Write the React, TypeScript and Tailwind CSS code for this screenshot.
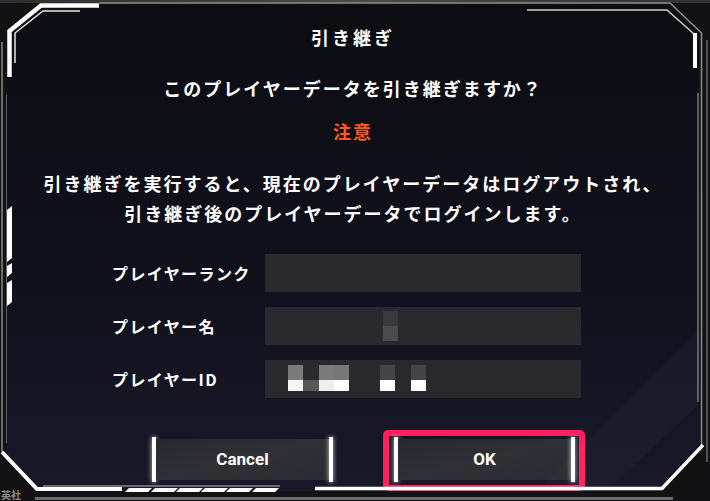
import React from "react";

const jp = "font-['Noto_Sans_CJK_JP','Noto_Sans',sans-serif]";

function Field({ children }: { children?: React.ReactNode }) {
  return <div className="relative w-[316px] h-[38px] bg-[#2a2a2e]">{children}</div>;
}

function Block({ x, y, w, h, c }: { x: number; y: number; w: number; h: number; c: string }) {
  // pixelated (mosaic) cells over the field value
  return <span className="absolute" style={{ left: x, top: y, width: w, height: h, background: c }} />;
}

function Row({ label, children }: { label: string; children?: React.ReactNode }) {
  return (
    <div className="flex items-center h-[38px]">
      <div className={`w-[153px] text-[16px] leading-[20px] font-bold tracking-[1.4px] text-white ${jp}`}>{label}</div>
      <Field>{children}</Field>
    </div>
  );
}

function GameButton({ label }: { label: string }) {
  return (
    <div className="flex items-stretch w-[181px] h-[45px]">
      <span className="w-[4px] bg-white shadow-[0_0_5px_rgba(255,255,255,0.8)]" />
      <div className="flex-1 my-[2px] flex items-center justify-center bg-linear-to-br from-[#28292e] via-[#303136] to-[#2a2b30] font-['Roboto',sans-serif] font-bold text-[17px] text-white">
        {label}
      </div>
      <span className="w-[4px] bg-white shadow-[0_0_5px_rgba(255,255,255,0.8)]" />
    </div>
  );
}

function Frame() {
  const dashes = [125, 151, 176, 201, 226, 252];
  return (
    <svg className="absolute inset-0 pointer-events-none" width="710" height="501" viewBox="0 0 710 501">
      {/* subtle light band bottom right */}
      <polygon points="540,488 610,488 698,405 698,330" fill="rgba(255,255,255,0.025)" />
      {/* top-left */}
      <path d="M9.5 77 V31 L41 5.5 H99" stroke="#fff" strokeWidth="4.5" fill="none" />
      <path d="M15 63 V33 L43 11 H80" stroke="#e5e5e5" strokeWidth="1.5" fill="none" />
      {/* outer grey lines */}
      <path d="M99 3 H670 L701.5 33 V445" stroke="#8c8c8c" strokeWidth="1.5" fill="none" />
      <path d="M2 42 V452" stroke="#8a8a8a" strokeWidth="1.5" fill="none" />
      <path d="M6.5 95 V443" stroke="#5e5e66" strokeWidth="1" fill="none" />
      <path d="M707 40 V462" stroke="#6a6a6a" strokeWidth="1.5" fill="none" />
      <path d="M698 93 V402" stroke="#7a7a7a" strokeWidth="1.5" fill="none" />
      {/* top-right */}
      <path d="M527 10 H667 L694 34" stroke="#d0d0d0" strokeWidth="1.5" fill="none" />
      <path d="M695 33 V68" stroke="#fff" strokeWidth="4" fill="none" />
      {/* left white segments */}
      <polygon points="7,210 12,206 12,258 7,262" fill="#fff" />
      <polygon points="7,266 12,263 12,273 7,277" fill="#fff" />
      <polygon points="7,283 12,280 12,302 7,306" fill="#fff" />
      {/* bottom-left */}
      <path d="M2 452 L37 489 H122" stroke="#fff" strokeWidth="4" fill="none" />
      <path d="M43 486 H280" stroke="#8a8a8a" strokeWidth="1.5" fill="none" />
      {dashes.map((x) => (
        <polygon key={x} points={`${x},492 ${x + 4},488 ${x + 27},488 ${x + 23},492`} fill="#fff" />
      ))}
      {/* bottom-right */}
      <path d="M703 445 L662 488.5 H315" stroke="#fff" strokeWidth="3.5" fill="none" />
      <rect x="35" y="497" width="638" height="3" fill="#6b6b6b" />
    </svg>
  );
}

export default function App() {
  return (
    <div className={`relative w-[710px] h-[501px] overflow-hidden bg-[#121214] ${jp}`}>
      <div className="h-[3px] bg-linear-to-r from-[#2e2e2e] via-[#4a4a4a] to-[#333]" />
      <div className="ml-[7px] mt-[2px] w-[692px] h-[486px] bg-linear-to-b from-[#0c0c13] via-[#10101b] to-[#18182a] [clip-path:polygon(0_25px,33px_0,660px_0,692px_28px,692px_440px,649px_486px,30px_486px,0_452px)] flex flex-col items-center pt-[20px]">
        <div className="text-[18px] leading-[24px] font-bold tracking-[3px] text-white">引き継ぎ</div>
        <div className="mt-[27px] text-[18px] leading-[24px] font-bold tracking-[2px] text-white">
          このプレイヤーデータを引き継ぎますか？
        </div>
        <div className="mt-[19px] text-[18px] leading-[24px] font-bold tracking-[2px] text-[#ff5a17]">注意</div>
        <div className="mt-[25px] text-[18px] leading-[30px] font-bold tracking-[2px] text-white text-center">
          <div>引き継ぎを実行すると、現在のプレイヤーデータはログアウトされ、</div>
          <div>引き継ぎ後のプレイヤーデータでログインします。</div>
        </div>

        <div className="self-start ml-[105px] mt-[26px] flex flex-col gap-[15px]">
          <Row label="プレイヤーランク" />
          <Row label="プレイヤー名">
            <Block x={118} y={4} w={15} h={15} c="#3a3a3e" />
            <Block x={118} y={19} w={15} h={15} c="#4b4b4e" />
          </Row>
          <Row label="プレイヤーID">
            <Block x={23} y={5} w={15} h={15} c="#7b7b7b" />
            <Block x={23} y={20} w={15} h={11} c="#f5f5f5" />
            <Block x={38} y={20} w={16} h={11} c="#58585a" />
            <Block x={54} y={5} w={15} h={15} c="#7b7b7b" />
            <Block x={54} y={20} w={15} h={11} c="#eeeeee" />
            <Block x={69} y={5} w={15} h={15} c="#777777" />
            <Block x={69} y={20} w={15} h={11} c="#ffffff" />
            <Block x={115} y={5} w={15} h={15} c="#444448" />
            <Block x={115} y={20} w={15} h={11} c="#ffffff" />
            <Block x={146} y={5} w={15} h={15} c="#444448" />
            <Block x={146} y={20} w={15} h={11} c="#ffffff" />
          </Row>
        </div>

        <div className="self-start ml-[145px] mt-[32px] flex items-start gap-[50px]">
          <div className="mt-[7px]">
            <GameButton label="Cancel" />
          </div>
          <div className="relative z-10 border-[6px] border-[#ff1f5e] rounded-[5px] pl-[5px] pr-[4px] pt-[1px] pb-[3px]">
            <GameButton label="OK" />
          </div>
        </div>
      </div>
      <Frame />
      <div className="absolute left-[1px] top-[489px] text-[10px] leading-[11px] font-bold text-[#8a8a8a]">英社</div>
    </div>
  );
}
